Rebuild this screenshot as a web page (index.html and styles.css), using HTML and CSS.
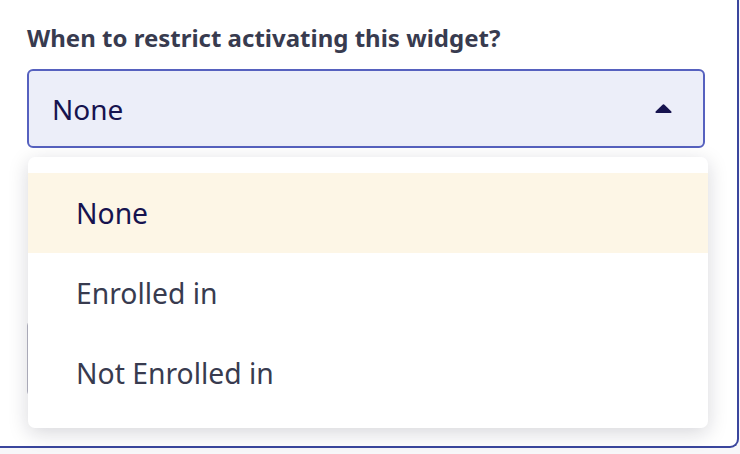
FILE: index.html
```html
<!DOCTYPE html>
<html lang="en">
<head>
<meta charset="utf-8">
<title>Widget restriction</title>
<link rel="stylesheet" href="styles.css">
</head>
<body>
<div class="panel">
  <div class="field">
    <div class="label">When to restrict activating this widget?</div>
    <div class="select-wrap">
      <div class="select">
        <span class="select-value">None</span>
        <svg class="caret" width="17" height="9" viewBox="0 0 17 9" aria-hidden="true">
          <path d="M7.3 0.9 Q8.5 -0.2 9.7 0.9 L16.4 7.6 Q17 9 15.6 9 L1.4 9 Q0 9 0.6 7.6 Z" fill="#16134f"/>
        </svg>
      </div>
      <ul class="menu">
        <li class="item active">None</li>
        <li class="item">Enrolled in</li>
        <li class="item">Not Enrolled in</li>
      </ul>
    </div>
  </div>
  <div class="under-box"></div>
</div>
</body>
</html>
```
FILE: styles.css
```css
* { box-sizing: border-box; }
html, body { margin: 0; padding: 0; }
body {
  background: #f7f7f9;
  font-family: "Noto Sans", "Open Sans", sans-serif;
  width: 740px;
  height: 454px;
  overflow: hidden;
}
.panel {
  width: 739px;
  height: 448px;
  background: #ffffff;
  border-right: 2px solid #3a469d;
  border-bottom: 2px solid #3a469d;
  border-bottom-right-radius: 9px;
  padding: 23px 0 0 27px;
}
.label {
  font-size: 24px;
  line-height: 30px;
  font-weight: 700;
  color: #383b4f;
}
.select-wrap {
  position: relative;
  margin-top: 16px;
  width: 678px;
}
.select {
  height: 79px;
  border: 2px solid #5661bf;
  border-radius: 6px;
  background: #eceef9;
  display: flex;
  align-items: center;
  justify-content: space-between;
  padding: 0 31px 0 23px;
}
.select-value {
  font-size: 28px;
  color: #16134f;
}
.caret { display: block; margin-top: -1px; }
.menu {
  position: absolute;
  z-index: 2;
  left: 1px;
  top: 88px;
  width: 680px;
  margin: 0;
  padding: 16px 0 15px;
  list-style: none;
  background: #ffffff;
  border-radius: 7px;
  box-shadow: 0 5px 20px rgba(20, 20, 40, 0.17);
}
.item {
  height: 80px;
  display: flex;
  align-items: center;
  padding-left: 48px;
  font-size: 28.3px;
  color: #383b4f;
}
.item.active {
  background: #fdf6e6;
  color: #16134f;
}
.under-box {
  margin-top: 172px;
  width: 678px;
  height: 77px;
  border: 2px solid #b7b7c4;
  border-radius: 6px;
}
```
